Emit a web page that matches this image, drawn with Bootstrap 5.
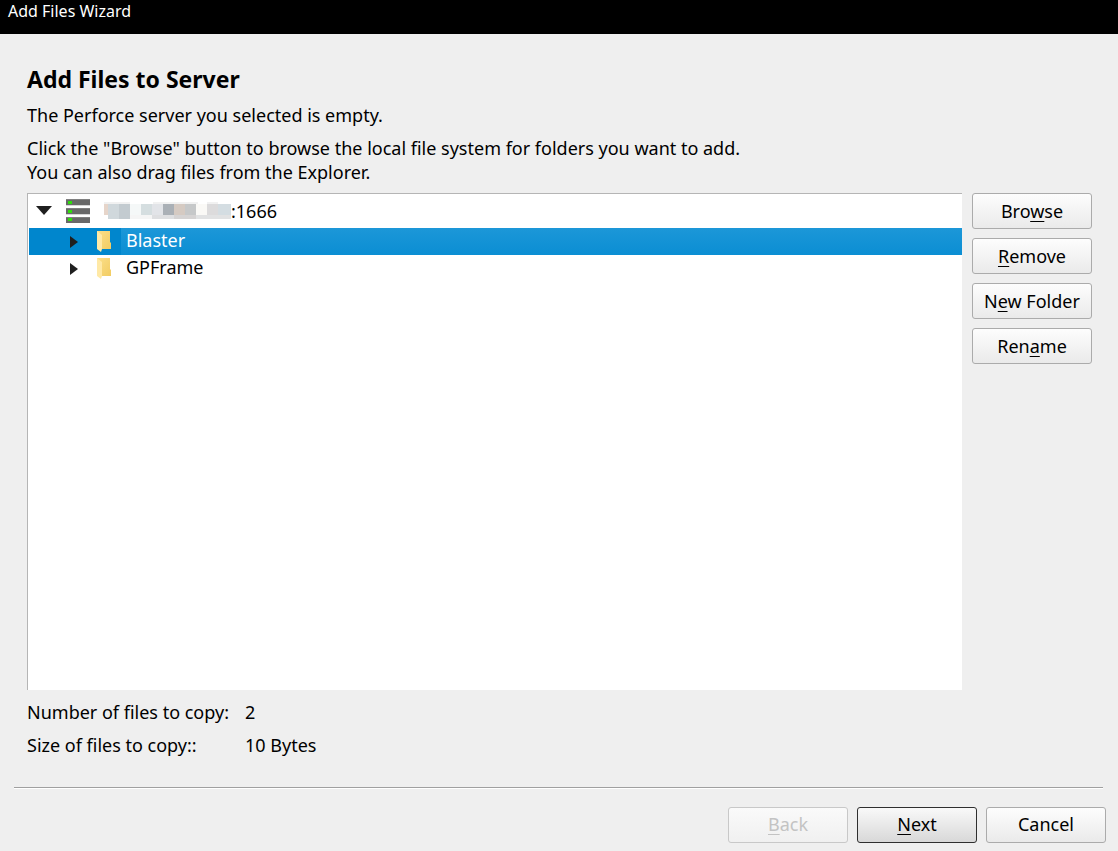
<!DOCTYPE html>
<html lang="en">
<head>
<meta charset="utf-8">
<meta name="viewport" content="width=device-width, initial-scale=1">
<title>Add Files Wizard</title>
<link href="https://cdn.jsdelivr.net/npm/bootstrap@5.3.0/dist/css/bootstrap.min.css" rel="stylesheet">
<style>
  body { background: #efefef; color: #000; font-family: "Noto Sans", "Open Sans", sans-serif; font-size: 18px; line-height: 24px; }
  .title-bar { background: #000; color: #fff; height: 34px; padding-left: 8px; font-size: 16px; line-height: 23px; }
  .wizard-page { padding: 31px 26px 0 27px; }
  .wizard-page h1 { font-size: 23px; line-height: 28px; margin-bottom: 10px; }
  .intro { margin-bottom: 9px; }
  .work-area { gap: 10px; margin-top: 9px; }
  .tree { background: #fff; border-left: 1px solid #b5b5b5; border-top: 1px solid #b5b5b5; padding-left: 1px; }
  .tree-row { height: 27px; }
  .tree-row.server { height: 34px; padding-bottom: 1px; }
  .tree-row.active { background: #0086cd; color: #fff; }
  .tree-label { height: 27px; padding-left: 5px; line-height: 25px; }
  .active .tree-label { background: linear-gradient(#1c97d8, #0b8ed3); }
  .toggle { width: 30px; flex: none; }
  .nested { padding-left: 30px; }
  .server-icon { margin-left: 7px; }
  .mosaic { margin-left: 14px; }
  .folder-icon { flex: none; margin-right: 2px; }
  .wbtn { --bs-btn-padding-x: 0; --bs-btn-padding-y: 0; --bs-btn-border-radius: 3px; --bs-btn-font-size: 18px; --bs-btn-line-height: 24px;
    --bs-btn-color: #000; --bs-btn-border-color: #ababab; --bs-btn-disabled-color: #c3c3c3; --bs-btn-disabled-border-color: #c8c8c8; --bs-btn-disabled-opacity: 1;
    width: 120px; height: 36px; border-width: 1px; background: linear-gradient(#fdfdfd, #eaeaea); }
  .wbtn u { text-underline-offset: 3px; text-decoration-thickness: 1px; text-decoration-skip-ink: none; }
  .wbtn:disabled { background: linear-gradient(#fafafa, #f0f0f0); }
  .wbtn.default { --bs-btn-border-color: #2f2f2f; background: linear-gradient(#f9f9f9, #d8d8d8); }
  .side, .actions { gap: 9px; }
  .actions .wbtn { padding-bottom: 2px; }
  .totals { display: grid; grid-template-columns: 208px 1fr; column-gap: 10px; row-gap: 9px; margin: 10px 0 30px; }
  .totals dt, .totals dd { font-weight: 400; margin: 0; }
  .rule { margin: 0 15px 0 14px; border-top: 1px solid #a0a0a0; border-bottom: 1px solid #fff; }
  .actions { padding: 18px 12px 8px; }
</style>
</head>
<body class="d-flex flex-column min-vh-100">
  <header class="title-bar">Add Files Wizard</header>

  <main class="wizard-page d-flex flex-column flex-grow-1">
    <h1 class="fw-bold">Add Files to Server</h1>
    <p class="intro">The Perforce server you selected is empty.</p>
    <p class="mb-0">Click the "Browse" button to browse the local file system for folders you want to add.<br>You can also drag files from the Explorer.</p>

    <div class="work-area d-flex flex-grow-1">
      <div class="tree flex-grow-1">
        <div class="tree-row server d-flex align-items-center">
          <span class="toggle d-flex justify-content-center"><svg width="16" height="9" aria-hidden="true"><path d="M0 0h16L8 9z" fill="#1f1f1f"/></svg></span>
          <svg class="server-icon" width="24" height="24" aria-hidden="true">
            <path d="M0 0h24v6H0zM0 9h24v6H0zM0 18h24v6H0z" fill="#696969"/>
            <path d="M0 6h24v1H0zM0 15h24v1H0z" fill="#d6d6d6"/>
            <path d="M0 0h24v1H0zM0 9h24v1H0zM0 18h24v1H0z" fill="#808080"/>
            <path d="M2 2h4v3H2zM2 11h4v3H2zM2 19h4v3H2z" fill="#2fdc0c"/>
          </svg>
          <svg class="mosaic" width="127" height="18" aria-hidden="true" shape-rendering="crispEdges">
            <path d="M0 0h26v2H0zM49 0h45v2H49zM103 0h11v2h-11z" fill="#f1f1f1"/>
            <path d="M0 2h4v11H0z" fill="#e6d5ca"/><path d="M4 2h11v15H4z" fill="#d0d8dc"/><path d="M15 2h11v15H15z" fill="#c3cbd0"/>
            <path d="M26 2h11v11H26z" fill="#f5f8f8"/><path d="M37 2h11v11H37z" fill="#d5dee0"/><path d="M48 2h11v11H48z" fill="#e2e4e8"/>
            <path d="M59 2h11v11H59z" fill="#aab0b6"/><path d="M70 2h11v11H70z" fill="#d5cac2"/><path d="M81 2h11v11H81z" fill="#c6c8c9"/>
            <path d="M92 2h11v11H92z" fill="#faf9f6"/><path d="M103 2h11v11h-11z" fill="#dcdbdc"/><path d="M114 2h13v11h-13z" fill="#d4dde2"/>
            <path d="M26 13h22v4H26z" fill="#f5f5f5"/><path d="M48 13h22v4H48z" fill="#dedfe1"/><path d="M70 13h22v4H70z" fill="#d5d3d3"/><path d="M92 13h35v4H92z" fill="#e1e2e3"/>
          </svg>
          <span>:1666</span>
        </div>
        <div class="tree-row active nested d-flex align-items-center">
          <span class="toggle d-flex justify-content-center"><svg width="8" height="12" aria-hidden="true"><path d="M0 0l8 6-8 6z" fill="#1f1f1f"/></svg></span>
          <svg class="folder-icon" width="30" height="21" aria-hidden="true"><use href="#folder"/></svg>
          <span class="tree-label flex-grow-1">Blaster</span>
        </div>
        <div class="tree-row nested d-flex align-items-center">
          <span class="toggle d-flex justify-content-center"><svg width="8" height="12" aria-hidden="true"><path d="M0 0l8 6-8 6z" fill="#1f1f1f"/></svg></span>
          <svg class="folder-icon" width="30" height="21" aria-hidden="true"><use href="#folder"/></svg>
          <span class="tree-label flex-grow-1">GPFrame</span>
        </div>
      </div>
      <div class="side d-flex flex-column">
        <button type="button" class="btn wbtn">Bro<u>w</u>se</button>
        <button type="button" class="btn wbtn"><u>R</u>emove</button>
        <button type="button" class="btn wbtn">N<u>e</u>w Folder</button>
        <button type="button" class="btn wbtn">Ren<u>a</u>me</button>
      </div>
    </div>

    <dl class="totals">
      <dt>Number of files to copy:</dt><dd>2</dd>
      <dt>Size of files to copy::</dt><dd>10 Bytes</dd>
    </dl>
  </main>

  <div class="rule"></div>
  <footer class="actions d-flex justify-content-end">
    <button type="button" class="btn wbtn" disabled><u>B</u>ack</button>
    <button type="button" class="btn wbtn default"><u>N</u>ext</button>
    <button type="button" class="btn wbtn">Cancel</button>
  </footer>

  <svg width="0" height="0" class="position-absolute" aria-hidden="true">
    <defs>
      <linearGradient id="leaf" x1="0" y1="0" x2="1" y2="1"><stop offset="0" stop-color="#fbdf8a"/><stop offset="1" stop-color="#f2cc62"/></linearGradient>
      <g id="folder"><path d="M8 0h13v11l1 1v6H8z" fill="url(#leaf)"/><path d="M8 0l5 4v14l-1 3-4-3z" fill="#ffe9a6"/></g>
    </defs>
  </svg>
  <script src="https://cdn.jsdelivr.net/npm/bootstrap@5.3.0/dist/js/bootstrap.bundle.min.js"></script>
</body>
</html>
